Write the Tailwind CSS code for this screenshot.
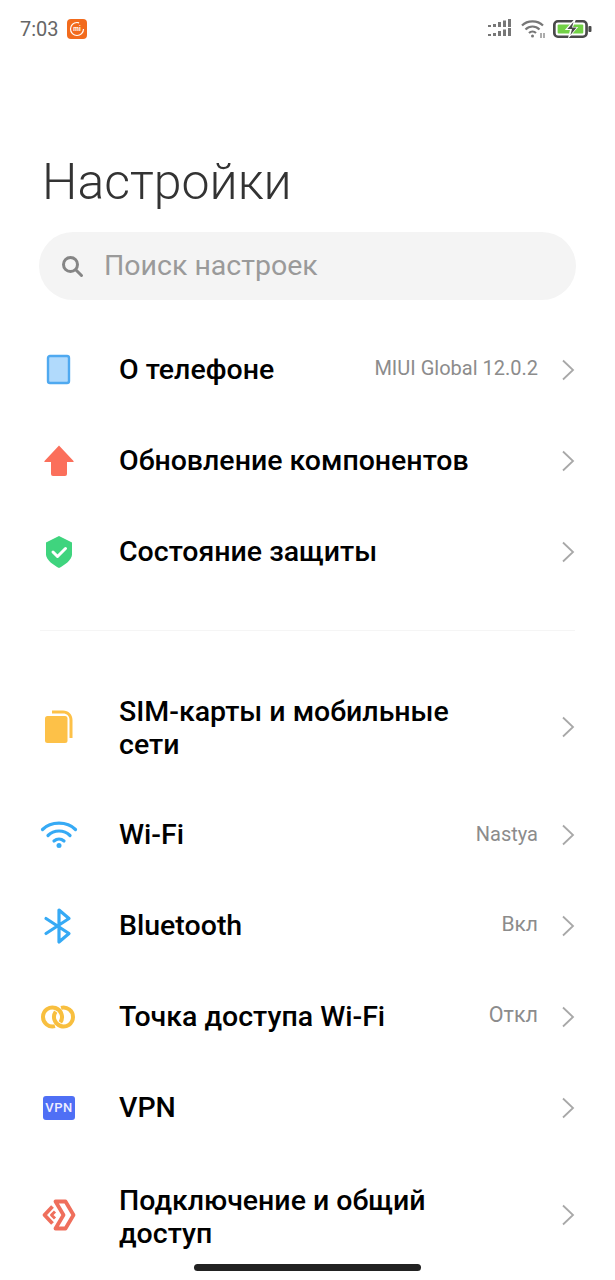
<!DOCTYPE html>
<html lang="ru">
<head>
<meta charset="utf-8">
<script src="https://cdn.jsdelivr.net/npm/@tailwindcss/browser@4"></script>
</head>
<body class="bg-white">
<div class="relative w-[615px] h-[1280px] overflow-hidden bg-white font-['Roboto',sans-serif] text-black">
  <!-- status bar -->
  <div class="h-[58px] flex items-center justify-between pl-[20px] pr-[23px]">
    <div class="flex items-center gap-[8px]">
      <span class="text-[20px] leading-none text-[#666]">7:03</span>
      <svg width="20" height="20" viewBox="0 0 20 20"><rect width="20" height="20" rx="4" fill="#f26b1d"/><circle cx="10" cy="10" r="6.500" fill="none" stroke="#fff" stroke-width="1.200" stroke-dasharray="32 9"/><text x="10" y="12.200" text-anchor="middle" font-size="6.500" font-weight="700" fill="#fff" font-family="Roboto">mi</text></svg>
    </div>
    <div class="flex items-center gap-[8px]">
      <svg width="24" height="20" viewBox="0 0 24 20" fill="#777"><rect x="0" y="6" width="3" height="2"/><rect x="5" y="5" width="3" height="3"/><rect x="10" y="3" width="3" height="5"/><rect x="15" y="1.500" width="3" height="6.500"/><rect x="20" y="0" width="3" height="8"/><rect x="0" y="15" width="3" height="2"/><rect x="5" y="14" width="3" height="3"/><rect x="10" y="12" width="3" height="5"/><rect x="15" y="10.500" width="3" height="6.500"/><rect x="20" y="9" width="3" height="8"/></svg>
      <svg class="ml-[1px]" width="26" height="20" viewBox="0 0 26 20" fill="none" stroke="#777" stroke-width="2.200"><path d="M1 6.500C6.500 1 16.500 1 22 6.500"/><path d="M4.500 10.500C8.500 6.500 14.500 6.500 18.500 10.500"/><path d="M8 14C10 12 13 12 15 14"/><circle cx="11.500" cy="17" r="1.500" fill="#777" stroke="none"/><path d="M20 14v5M23 14v5" stroke-width="1.200"/></svg>
      <svg class="-ml-[2px]" width="39" height="20" viewBox="0 0 38 20" preserveAspectRatio="none"><rect x="1.300" y="2.300" width="31.400" height="15.400" rx="3.500" fill="#fff" stroke="#4a4a4a" stroke-width="2.600"/><rect x="4.500" y="5.500" width="25" height="9" rx="1" fill="#72d146"/><rect x="34.500" y="7" width="3" height="6" rx="1" fill="#4a4a4a"/><path d="M21 0L11.500 11h5l-2 9 10-12h-5l3-8z" fill="#fff"/><path d="M20 3l-6 7h4.500l-1.500 6 6-7.500h-4.500l1.500-5.500z" fill="#4a4a4a"/></svg>
    </div>
  </div>

  <h1 class="h-[174px] pl-[42px] pt-[95px] text-[50px] leading-[58px] font-light text-[#333]">Настройки</h1>

  <div class="mx-[39px] h-[68px] rounded-full bg-[#f4f4f4] flex items-center pl-[21px]">
    <svg width="24" height="24" viewBox="0 0 24 24" fill="none" stroke="#858585" stroke-width="3"><circle cx="10.500" cy="10.500" r="7"/><path d="M16 16l5.500 5.500" stroke-linecap="round"/></svg>
    <span class="ml-[20px] text-[28.5px] leading-none text-[#9a9a9a]">Поиск настроек</span>
  </div>

  <div class="mt-[24px]">
    <div class="h-[91px] pl-[40px] pr-[40px] flex items-center">
      <div class="w-[79px] flex-none"><svg width="38" height="38" viewBox="0 0 38 38"><rect x="8" y="5" width="21" height="27" rx="2" fill="#b1dafc" stroke="#4fa9f0" stroke-width="2.400"/></svg></div>
      <span class="flex-1 text-[28.5px] leading-[33px] font-medium">О телефоне</span>
      <span class="text-[20px] text-[#8c8c8c] mr-[23px] pb-[3px]">MIUI Global 12.0.2</span>
      <svg width="14" height="22" viewBox="0 0 14 22" fill="none" stroke="#a8a8a8" stroke-width="1.800"><path d="M2 1.500l10 9.500-10 9.500"/></svg>
    </div>
    <div class="h-[91px] pl-[40px] pr-[40px] flex items-center">
      <div class="w-[79px] flex-none"><svg width="38" height="38" viewBox="0 0 38 38"><path d="M19 3.500L33.500 19a.6.6 0 0 1-.5 1H27v12a2 2 0 0 1-2 2H13a2 2 0 0 1-2-2V20H5a.6.6 0 0 1-.5-1z" fill="#fb6f5b"/></svg></div>
      <span class="flex-1 text-[28.5px] leading-[33px] font-medium">Обновление компонентов</span>
      <svg width="14" height="22" viewBox="0 0 14 22" fill="none" stroke="#a8a8a8" stroke-width="1.800"><path d="M2 1.500l10 9.500-10 9.500"/></svg>
    </div>
    <div class="h-[91px] pl-[40px] pr-[40px] flex items-center">
      <div class="w-[79px] flex-none"><svg width="38" height="38" viewBox="0 0 38 38"><path d="M19 3l13 6.500v12c0 5.500-8 11-13 13.500C14 32.500 6 27 6 21.500v-12z" fill="#3fd47e"/><path d="M13 19l4.500 4.500 8-8" fill="none" stroke="#fff" stroke-width="3" stroke-linecap="round" stroke-linejoin="round"/></svg></div>
      <span class="flex-1 text-[28.5px] leading-[33px] font-medium">Состояние защиты</span>
      <svg width="14" height="22" viewBox="0 0 14 22" fill="none" stroke="#a8a8a8" stroke-width="1.800"><path d="M2 1.500l10 9.500-10 9.500"/></svg>
    </div>
  </div>

  <div class="mx-[40px] mt-[33px] h-px bg-[#f5f5f5]"></div>

  <div class="mt-[34px]">
    <div class="h-[124px] pl-[40px] pr-[40px] flex items-center">
      <div class="w-[79px] flex-none"><svg class="-mt-[3px]" width="38" height="38" viewBox="0 0 38 38"><path d="M12 3.500h11c5.500 0 9.500 4 9.500 9.500v18h-3V13c0-4-2.500-6.500-6.500-6.500H12z" fill="#fdc148"/><rect x="5" y="9" width="22.500" height="27" rx="2.500" fill="#fdc148"/></svg></div>
      <span class="flex-1 text-[28.5px] leading-[33px] font-medium pr-[70px] pt-[2px]">SIM-карты и мобильные сети</span>
      <svg width="14" height="22" viewBox="0 0 14 22" fill="none" stroke="#a8a8a8" stroke-width="1.800"><path d="M2 1.500l10 9.500-10 9.500"/></svg>
    </div>
    <div class="h-[91px] pl-[40px] pr-[40px] flex items-center">
      <div class="w-[79px] flex-none"><svg width="38" height="38" viewBox="0 0 38 38" fill="none" stroke="#36aaf5" stroke-width="3.200" stroke-linecap="round"><path d="M2.500 13.500C11 5 27 5 35.500 13.500"/><path d="M8 19.500C14 13.500 24 13.500 30 19.500"/><path d="M14 25C17 22.500 21 22.500 24 25"/><circle cx="19" cy="29.500" r="2.500" fill="#36aaf5" stroke="none"/></svg></div>
      <span class="flex-1 text-[28.5px] leading-[33px] font-medium">Wi-Fi</span>
      <span class="text-[20px] text-[#8c8c8c] mr-[23px] pb-[2px]">Nastya</span>
      <svg width="14" height="22" viewBox="0 0 14 22" fill="none" stroke="#a8a8a8" stroke-width="1.800"><path d="M2 1.500l10 9.500-10 9.500"/></svg>
    </div>
    <div class="h-[91px] pl-[40px] pr-[40px] flex items-center">
      <div class="w-[79px] flex-none"><svg width="38" height="38" viewBox="0 0 38 38" fill="none" stroke="#36aaf5" stroke-width="3.200" stroke-linejoin="round" stroke-linecap="round"><path d="M6 11.500L29 26.500 19 35V3l10 8.500L6 26.500"/></svg></div>
      <span class="flex-1 text-[28.5px] leading-[33px] font-medium">Bluetooth</span>
      <span class="text-[21px] text-[#8c8c8c] mr-[23px] pb-[1px]">Вкл</span>
      <svg width="14" height="22" viewBox="0 0 14 22" fill="none" stroke="#a8a8a8" stroke-width="1.800"><path d="M2 1.500l10 9.500-10 9.500"/></svg>
    </div>
    <div class="h-[91px] pl-[40px] pr-[40px] flex items-center">
      <div class="w-[79px] flex-none"><svg width="38" height="38" viewBox="0 0 38 38" fill="none" stroke="#f8bf3f" stroke-width="4"><path d="M14.960 28.180A9.500 9.500 0 1 1 20.280 24.450"/><path d="M21.040 9.820A9.500 9.500 0 1 1 15.720 13.550"/></svg></div>
      <span class="flex-1 text-[28.5px] leading-[33px] font-medium">Точка доступа Wi-Fi</span>
      <span class="text-[21.5px] text-[#8c8c8c] mr-[23px] pb-[2px]">Откл</span>
      <svg width="14" height="22" viewBox="0 0 14 22" fill="none" stroke="#a8a8a8" stroke-width="1.800"><path d="M2 1.500l10 9.500-10 9.500"/></svg>
    </div>
    <div class="h-[91px] pl-[40px] pr-[40px] flex items-center">
      <div class="w-[79px] flex-none"><div class="ml-[3px] w-[32px] h-[24px] rounded-[3px] bg-[#4f6ff5] text-[#eef] text-[13px] font-medium flex items-center justify-center tracking-[0.5px]">VPN</div></div>
      <span class="flex-1 text-[28.5px] leading-[33px] font-medium">VPN</span>
      <svg width="14" height="22" viewBox="0 0 14 22" fill="none" stroke="#a8a8a8" stroke-width="1.800"><path d="M2 1.500l10 9.500-10 9.500"/></svg>
    </div>
    <div class="h-[124px] pl-[40px] pr-[40px] flex items-center">
      <div class="w-[79px] flex-none"><svg width="38" height="38" viewBox="0 0 38 38" fill="none" stroke="#ef6f5c" stroke-width="3.800" stroke-linejoin="round"><path d="M12.500 10.500L4.500 19l8 8.500"/><path d="M15 15.500L11.500 19l3.500 3.500" stroke-width="3"/><path d="M15.500 5.500h10L33.500 19l-8 13.500h-10L23.500 19z"/></svg></div>
      <span class="flex-1 text-[28.5px] leading-[33px] font-medium pr-[70px] pt-[4px]">Подключение и общий доступ</span>
      <svg width="14" height="22" viewBox="0 0 14 22" fill="none" stroke="#a8a8a8" stroke-width="1.800"><path d="M2 1.500l10 9.500-10 9.500"/></svg>
    </div>
  </div>

  <div class="absolute left-[194px] top-[1264px] w-[227px] h-[7px] rounded-full bg-[#222]"></div>
</div>
</body>
</html>
